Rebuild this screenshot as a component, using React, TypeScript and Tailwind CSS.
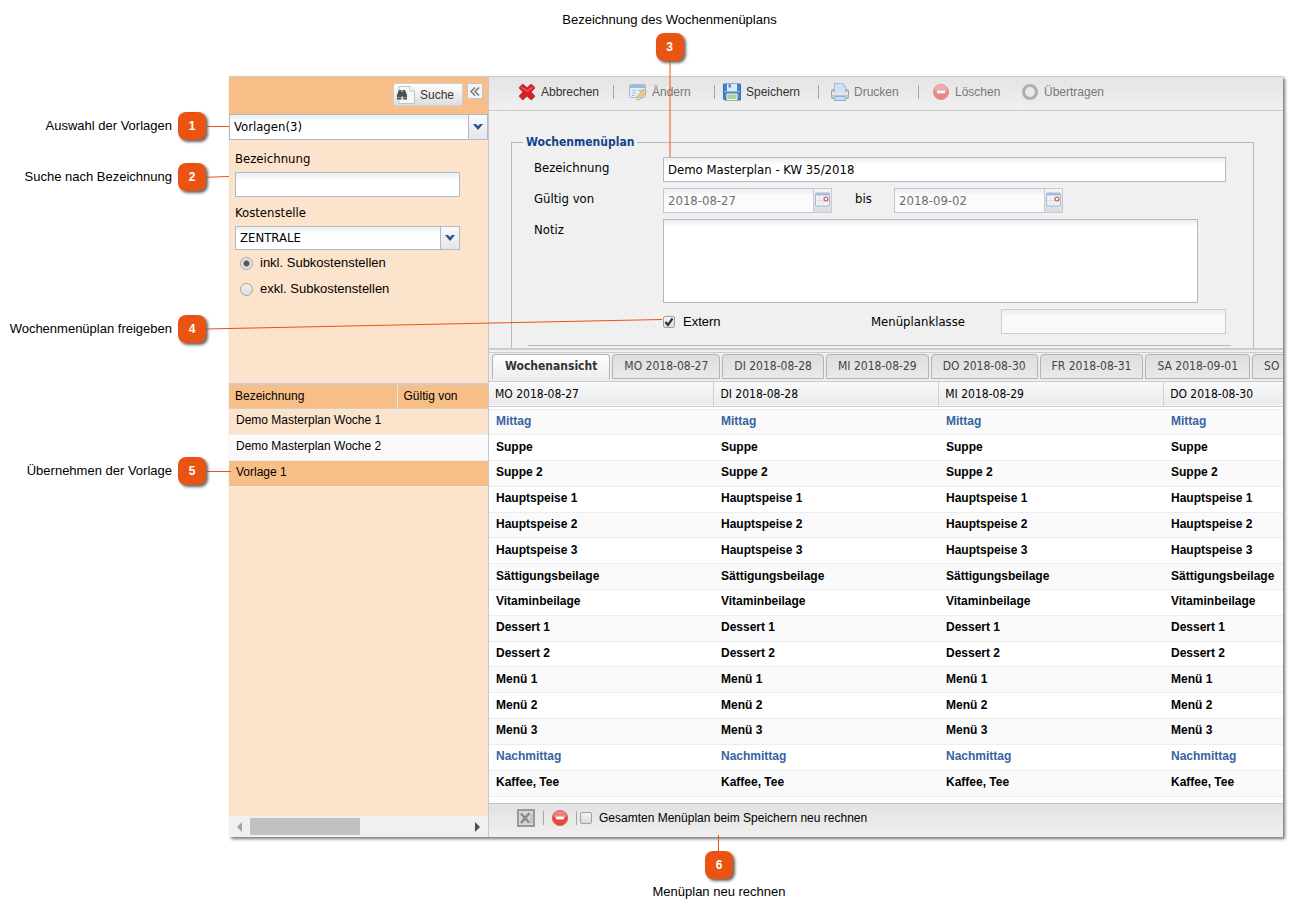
import { useState } from "react";
import type { ReactNode } from "react";
import clsx from "clsx";

const days = ["MO 2018-08-27", "DI 2018-08-28", "MI 2018-08-29", "DO 2018-08-30"];

const tabs = [
    "Wochenansicht",
    "MO 2018-08-27",
    "DI 2018-08-28",
    "MI 2018-08-29",
    "DO 2018-08-30",
    "FR 2018-08-31",
    "SA 2018-09-01",
    "SO",
];

const menuRows = [
    { name: "Mittag", group: true },
    { name: "Suppe" },
    { name: "Suppe 2" },
    { name: "Hauptspeise 1" },
    { name: "Hauptspeise 2" },
    { name: "Hauptspeise 3" },
    { name: "Sättigungsbeilage" },
    { name: "Vitaminbeilage" },
    { name: "Dessert 1" },
    { name: "Dessert 2" },
    { name: "Menü 1" },
    { name: "Menü 2" },
    { name: "Menü 3" },
    { name: "Nachmittag", group: true },
    { name: "Kaffee, Tee" },
];

const templates = ["Demo Masterplan Woche 1", "Demo Masterplan Woche 2", "Vorlage 1"];

const tahoma = "font-['DejaVu_Sans_Condensed','Noto_Sans',sans-serif]";
const field = "border border-[#b5b8c8] bg-[linear-gradient(#e9eeee,#ffffff_7px)] px-1 outline-none";

function CancelIcon() {
    return (
        <svg viewBox="0 0 18 18" className="h-[18px] w-[18px]">
            <path d="M1.3 4.4 4.4 1.3Q5 1 6 2L9 4.8 12 2Q13 1 13.6 1.3L16.7 4.4Q17 5 16 6L13.2 9 16 12Q17 13 16.7 13.6L13.6 16.7Q13 17 12 16L9 13.2 6 16Q5 17 4.4 16.7L1.3 13.6Q1 13 2 12L4.8 9 2 6Q1 5 1.3 4.400Z" fill="#dc1f26" stroke="#8c3a3a" strokeWidth="0.8" />
            <path d="M3.500 4.300 9 8.200 14.500 4.300" fill="none" stroke="#ee6a70" strokeWidth="1.100" />
        </svg>
    );
}

function EditIcon() {
    return (
        <svg viewBox="0 0 18 18" className="h-[18px] w-[18px] opacity-60">
            <rect x="0.5" y="1.5" width="16" height="13" rx="1" fill="#e3eefb" stroke="#7b9fd0" />
            <path d="M1 2h15v3H1z" fill="#6f9bd8" />
            <path d="M3 7.5h4M3 10h4M3 12.5h3M9 7.5h5" stroke="#7b9fd0" strokeWidth="1.2" />
            <path d="M8 17l1-4.5L14.5 6l3 2.8L12 15.5z" fill="#f5b540" stroke="#b8792a" strokeWidth="0.9" />
            <path d="M8 17l1-4 2.7 2.5z" fill="#fbe3c0" stroke="#a97742" strokeWidth="0.6" />
        </svg>
    );
}

function SaveIcon() {
    return (
        <svg viewBox="0 0 18 18" className="h-[18px] w-[18px]">
            <path d="M.5 1h17v16H1.5l-1-1z" fill="#4a84cc" stroke="#3a6fb8" />
            <path d="M4 1h10v7H4z" fill="#dbe9f9" />
            <path d="M5.500 1h2.500v3.500H5.500z" fill="#5b8fd0" />
            <path d="M1 8.500h16" stroke="#8fb6e6" />
            <path d="M4 11h10v5.500H4z" fill="#a9d68e" stroke="#f0f6ea" />
        </svg>
    );
}

function PrintIcon() {
    return (
        <svg viewBox="0 0 18 18" className="h-[18px] w-[18px] opacity-70">
            <rect x="0.500" y="6.500" width="17" height="9" rx="1.500" fill="#b9b9b9" stroke="#858585" />
            <path d="M3.500 10V.5h8.500l2.500 2.500v7z" fill="#c4dffb" stroke="#7eaede" />
            <path d="M12 .5V3h2.500" fill="#fff" stroke="#7eaede" />
            <path d="M1 9.500h16v2H1z" fill="#f0f0f0" />
            <path d="M4 13.500h10l.8 4H3.200z" fill="#b7d8fa" stroke="#6b99c8" />
        </svg>
    );
}

function DeleteIcon({ faded }: { faded?: boolean }) {
    return (
        <svg viewBox="0 0 18 18" className={clsx("h-[18px] w-[18px]", faded && "opacity-60")}>
            <circle cx="9" cy="9" r="7.6" fill="#e8473f" stroke="#d0605a" />
            <path d="M2.4 8a6.6 6.6 0 0 1 13.2 0Q9 11 2.4 8z" fill="#f1837b" />
            <rect x="5" y="7.6" width="8" height="2.8" fill="#fff" />
        </svg>
    );
}

function TransferIcon() {
    return (
        <svg viewBox="0 0 18 18" className="h-[18px] w-[18px]">
            <circle cx="9" cy="9" r="6.5" fill="none" stroke="#b0b0b0" strokeWidth="3.2" />
        </svg>
    );
}

function ExcelIcon() {
    return (
        <svg viewBox="0 0 18 18" className="h-[18px] w-[18px]">
            <rect x="1" y="1" width="16" height="16" fill="#d6d6d6" stroke="#989898" strokeWidth="2" />
            <path d="M4 4.500l8 9M12.500 4l-8.500 10" stroke="#8a8a8a" strokeWidth="2.600" />
            <path d="M11 13h4.500M13 10h2.500M13.500 7h2" stroke="#999" />
        </svg>
    );
}

function SearchIcon() {
    return (
        <svg viewBox="0 0 20 18" className="h-[18px] w-5">
            <path d="M3 .5h11l4.500 4.500v12.500H3z" fill="#f7f7f7" stroke="#c2c2c2" />
            <path d="M14 .5V5h4.500" fill="#fff" stroke="#c2c2c2" />
            <path d="M3 4h2.500v2h1V4H9l2 5v4.500H7V10.500H5.500v3H1V9z" fill="#4a5258" />
            <path d="M1.500 11.500h3.500M7.500 11.500h3" stroke="#9aa2a8" />
        </svg>
    );
}

function CalendarIcon() {
    return (
        <svg viewBox="0 0 15 15" className="h-[15px] w-[15px] shrink-0 opacity-70">
            <rect x="0.5" y="1" width="14" height="13" rx="1" fill="#f7f9fc" stroke="#8aa4cc" />
            <path d="M.5 1h14v2.500H.5z" fill="#8aa8d6" />
            <path d="M1 8.500h13M4.500 4v9.500M8 4v9.500" stroke="#d8dfea" />
            <circle cx="11" cy="7" r="1.900" fill="#fff" stroke="#c0392b" strokeWidth="1.300" />
        </svg>
    );
}

function Chevron() {
    return (
        <svg viewBox="0 0 10 6" className="h-1.5 w-2.5">
            <path d="M0 0h3l2 2 2-2h3L5 6z" fill="#2f5192" />
        </svg>
    );
}

function ToolButton({ icon, label, disabled, className }: { icon: ReactNode; label: string; disabled?: boolean; className: string }) {
    return (
        <button type="button" disabled={disabled} className={clsx("flex shrink-0 items-center gap-[5px]", disabled ? "text-[#777777]" : "text-[#333333]", className)}>
            {icon}
            {label}
        </button>
    );
}

function Separator() {
    return <span className="h-3.5 w-px shrink-0 bg-[#aca899]" />;
}

function Combo({ id, label, value, className }: { id: string; label: string; value: string; className: string }) {
    return (
        <div className={clsx("relative", className)}>
            <select id={id} aria-label={label} className={clsx(field, "h-full w-full appearance-none pr-5 text-[13px]")}>
                <option>{value}</option>
            </select>
            <span className="pointer-events-none absolute inset-y-0 right-0 flex w-5 items-center justify-center border border-[#b5b8c8] bg-linear-to-b from-[#fafafa] to-[#e4e6ea]">
                <Chevron />
            </span>
        </div>
    );
}

function Check({ id, checked }: { id: string; checked?: boolean }) {
    return (
        <span className="relative flex h-3 w-3 shrink-0">
            <input
                id={id}
                type="checkbox"
                defaultChecked={checked}
                className="peer h-3 w-3 appearance-none rounded-xs border border-[#a0a0a0] bg-linear-to-b from-[#f4f4f4] to-[#dcdcdc]"
            />
            <svg viewBox="0 0 12 12" className="pointer-events-none invisible absolute inset-0 peer-checked:visible">
                <path d="M2.500 6l2.500 3 4.500-6.500" fill="none" stroke="#333" strokeWidth="2.200" />
            </svg>
        </span>
    );
}

function Radio({ id, checked }: { id: string; checked?: boolean }) {
    return (
        <input
            id={id}
            type="radio"
            name="subkostenstellen"
            defaultChecked={checked}
            className="h-[13px] w-[13px] shrink-0 appearance-none rounded-full border border-[#a3a3a3] bg-linear-to-b from-[#f2f2f2] to-[#dcdcdc] checked:bg-[radial-gradient(circle,#555555_2px,#e6e6e6_4px)]"
        />
    );
}

function DateField({ id, value }: { id: string; value: string }) {
    return (
        <div className="flex h-[25px] w-[169px]">
            <input id={id} disabled defaultValue={value} className={clsx(field, "w-[150px] border-r-0 text-[13px] text-[#444444] opacity-75")} />
            <button type="button" disabled aria-label="Kalender" className="flex flex-1 items-start justify-center border border-[#c8cad6] bg-linear-to-b from-[#f4f4f4] to-[#dcdcdc] pt-[3px]">
                <CalendarIcon />
            </button>
        </div>
    );
}

function Sidebar() {
    const [selected, setSelected] = useState(2);

    return (
        <aside className="flex w-[260px] shrink-0 flex-col border-r border-[#c8c8c8] bg-[#fce3cb]">
            <div className="flex h-[37px] items-start justify-end gap-1 bg-[#f7be87] pt-[6px] pr-[5px]">
                <button type="button" className="flex h-[23px] w-[70px] items-center gap-1 rounded-xs border border-[#cfcfcf] bg-linear-to-b from-white to-[#dedede] pl-0.5 text-xs text-[#333333]">
                    <SearchIcon />
                    Suche
                </button>
                <button type="button" aria-label="Einklappen" className="flex h-4 w-4 items-center justify-center rounded-xs border border-[#c4c4c4] bg-[#f4f4f4]">
                    <svg viewBox="0 0 10 9" className="h-[9px] w-2.5">
                        <path d="M5 .5l-4 4 4 4M9 .5l-4 4 4 4" fill="none" stroke="#777" strokeWidth="1.500" />
                    </svg>
                </button>
            </div>

            <div className={clsx("h-[269px]", tahoma)}>
                <Combo id="vorlagen" label="Vorlagen" value="Vorlagen(3)" className="h-[26px]" />
                <div className="pr-7 pl-1.5 text-[13px]">
                    <label htmlFor="suche" className="mt-2.5 mb-1 block leading-[18px]">Bezeichnung</label>
                    <input id="suche" className={clsx(field, "block h-[25px] w-full")} />
                    <label htmlFor="kostenstelle" className="mt-[7px] mb-1 block leading-[18px]">Kostenstelle</label>
                    <Combo id="kostenstelle" label="Kostenstelle" value="ZENTRALE" className="h-[24px]" />
                </div>
                <div className="flex flex-col pl-[11px] font-['Liberation_Sans',Arial,sans-serif] text-[13px] leading-[26px]">
                    <div className="flex items-center gap-[7px]">
                        <Radio id="inkl" checked />
                        <label htmlFor="inkl">inkl. Subkostenstellen</label>
                    </div>
                    <div className="flex items-center gap-[7px]">
                        <Radio id="exkl" />
                        <label htmlFor="exkl">exkl. Subkostenstellen</label>
                    </div>
                </div>
            </div>

            <table className="w-full table-fixed border-t-2 border-[#cccccc] text-left text-xs">
                <thead>
                    <tr className="h-6 border-b border-[#d0d0d0] bg-[#f7be87]">
                        <th className="w-[168px] border-r border-[#e8e8e8] px-1.5 font-normal">Bezeichnung</th>
                        <th className="px-1.5 font-normal">Gültig von</th>
                    </tr>
                </thead>
                <tbody>
                    {templates.map((name, i) => (
                        <tr
                            key={name}
                            onClick={() => setSelected(i)}
                            className={clsx("h-[26px] border-b border-[#ededed]", i === selected ? "bg-[#f7be87]" : i % 2 ? "bg-[#fafafa]" : "bg-[#fce3cb]")}
                        >
                            <td colSpan={2} className="px-[7px] pb-0.5">{name}</td>
                        </tr>
                    ))}
                </tbody>
            </table>

            {/* horizontal scrollbar of the template list */}
            <div className="mt-auto flex h-[21px] items-center bg-[#f0f0f0] px-[7px]">
                <svg viewBox="0 0 6 10" className="h-2.5 w-1.5">
                    <path d="M6 0v10L1 5z" fill="#a3a3a3" />
                </svg>
                <div className="ml-2 h-[17px] w-[110px] bg-[#c1c1c1]" />
                <svg viewBox="0 0 6 10" className="ml-auto h-2.5 w-1.5">
                    <path d="M0 0v10l5-5z" fill="#505050" />
                </svg>
            </div>
        </aside>
    );
}

function PlanForm() {
    return (
        <form className={clsx("h-[237px] overflow-hidden pt-[22px] pr-[29px] pl-[22px] text-[13px]", tahoma)}>
            <fieldset className="h-60 border border-[#b5b8c8]">
                <legend className="ml-[11px] px-[3px] text-xs leading-[18px] font-bold text-[#15428b]">Wochenmenüplan</legend>
                <div className="mt-1.5 mr-[22px] ml-4 flex flex-col gap-[6px] border-b border-[#b5b8c8] pr-[5px] pb-[11px] pl-1.5">
                    <div className="flex">
                        <label htmlFor="bezeichnung" className="w-[129px] shrink-0 leading-[22px]">Bezeichnung</label>
                        <input id="bezeichnung" defaultValue="Demo Masterplan - KW 35/2018" className={clsx(field, "h-[25px] min-w-0 flex-1")} />
                    </div>
                    <div className="flex">
                        <label htmlFor="von" className="w-[129px] shrink-0 leading-[22px]">Gültig von</label>
                        <DateField id="von" value="2018-08-27" />
                        <label htmlFor="bis" className="w-[62px] pl-[23px] leading-[22px]">bis</label>
                        <DateField id="bis" value="2018-09-02" />
                    </div>
                    <div className="flex pr-7">
                        <label htmlFor="notiz" className="w-[129px] shrink-0 leading-[22px]">Notiz</label>
                        <textarea id="notiz" className={clsx(field, "h-[84px] min-w-0 flex-1 resize-none")} />
                    </div>
                    <div className="flex items-center pl-[129px]">
                        <Check id="extern" checked />
                        <label htmlFor="extern" className="ml-2 font-['Liberation_Sans',Arial,sans-serif]">Extern</label>
                        <label htmlFor="klasse" className="ml-auto w-[130px]">Menüplanklasse</label>
                        <input id="klasse" disabled className={clsx(field, "h-[25px] w-[225px] opacity-65")} />
                    </div>
                </div>
            </fieldset>
        </form>
    );
}

function TabStrip() {
    const [active, setActive] = useState(0);

    return (
        <div className={clsx("mt-0.5 flex h-[30px] items-end gap-[2px] overflow-hidden border-y border-[#cccccc] bg-[#ededed] pb-[2px] pl-[3px] text-xs", tahoma)} role="tablist">
            {tabs.map((tab, i) => (
                <button
                    key={tab}
                    type="button"
                    role="tab"
                    aria-selected={i === active}
                    onClick={() => setActive(i)}
                    className={clsx(
                        "h-[25px] shrink-0 rounded-t-sm border border-[#b3b3b3] pb-0.5 whitespace-nowrap",
                        i === active
                            ? "border-b-0 bg-linear-to-b from-white to-[#ececec] px-3 font-bold text-[#333333]"
                            : "bg-linear-to-b from-[#dedede] to-[#e9e9e9] px-[11px] text-[#444444]",
                    )}
                >
                    {tab}
                </button>
            ))}
        </div>
    );
}

function WeekTable() {
    return (
        <div className="h-[421px] overflow-hidden bg-white">
            <table className={clsx("w-[900px] table-fixed text-left text-xs", tahoma)}>
                <thead>
                    <tr className="h-6 border-b border-[#cccccc] bg-linear-to-b from-[#f9f9f9] to-[#e9ebee]">
                        {days.map((day) => (
                            <th key={day} className="border-r border-[#d0d0d0] px-1.5 font-normal">{day}</th>
                        ))}
                    </tr>
                </thead>
            </table>
            <table className="mt-0.5 h-[388px] w-[900px] table-fixed text-xs font-bold">
                <tbody>
                    {menuRows.map((row) => (
                        <tr key={row.name} className="border-y border-[#ededed] odd:bg-[#fafafa]">
                            {days.map((day) => (
                                <td key={day} className={clsx("px-[7px] pb-0.5", row.group ? "text-[#3764a0]" : "text-black")}>{row.name}</td>
                            ))}
                        </tr>
                    ))}
                </tbody>
            </table>
        </div>
    );
}

function Callout({ n, text, className, textClassName }: { n: number; text: string; className: string; textClassName?: string }) {
    return (
        <div className={clsx("absolute flex items-center", className)}>
            <span className={clsx("text-[13px] leading-[18px] whitespace-nowrap", textClassName)}>{text}</span>
            <span className="flex h-7 w-7 shrink-0 items-center justify-center rounded-lg bg-[#ea5412] text-xs font-bold text-white shadow-[2px_2px_3px_#666666]">{n}</span>
        </div>
    );
}

export default function App() {
    return (
        <div className="relative min-h-[916px] bg-white pt-[76px] pr-[9px] pb-[79px] pl-[229px] font-['Liberation_Sans',Arial,sans-serif] text-black">
            <main className="flex border-t border-[#cccccc] shadow-[2px_2px_3px_#777777]">
                <Sidebar />
                <section className="min-w-0 flex-1 bg-[#f0f0f0]">
                    <div className="flex h-[34px] items-center overflow-hidden border-b border-[#cccccc] bg-linear-to-b from-[#e4e4e4] to-[#f0f0f0] pb-1 pl-[29px] text-xs">
                        <ToolButton icon={<CancelIcon />} label="Abbrechen" className="w-[95px]" />
                        <Separator />
                        <ToolButton icon={<EditIcon />} label="Ändern" disabled className="w-[100px] pl-[15px]" />
                        <Separator />
                        <ToolButton icon={<SaveIcon />} label="Speichern" className="w-[103px] pl-2" />
                        <Separator />
                        <ToolButton icon={<PrintIcon />} label="Drucken" disabled className="w-[99px] pl-[12px]" />
                        <Separator />
                        <ToolButton icon={<DeleteIcon faded />} label="Löschen" disabled className="w-[102px] pl-[13px]" />
                        <ToolButton icon={<TransferIcon />} label="Übertragen" disabled className="" />
                    </div>
                    <PlanForm />
                    <div className="h-0.5 bg-[#cccccc]" />
                    <TabStrip />
                    <WeekTable />
                    <div className="flex h-[34px] items-center border-t border-[#c4c4c4] bg-linear-to-b from-[#e2e2e2] to-[#f0f0f0] pb-1.5 pl-7 text-xs">
                        <button type="button" aria-label="Excel-Export" className="mr-2"><ExcelIcon /></button>
                        <Separator />
                        <button type="button" aria-label="Entfernen" className="mx-[7px]"><DeleteIcon /></button>
                        <Separator />
                        <label className="ml-[3px] flex items-center gap-[7px]" htmlFor="neurechnen">
                            <Check id="neurechnen" />
                            Gesamten Menüplan beim Speichern neu rechnen
                        </label>
                    </div>
                </section>
            </main>

            {/* leader lines from the numbered markers to the controls */}
            <svg width="1292" height="916" className="pointer-events-none absolute top-0 left-0 stroke-[#ea5412]">
                <path d="M205 126.500h24M205 177.300L229 176.500M670 61v96M205 329L662 319.500M205 471.500h26M718.500 835v17" fill="none" />
            </svg>

            <Callout n={1} text="Auswahl der Vorlagen" className="top-[112px] left-0 w-[206px] justify-end gap-1.5" />
            <Callout n={2} text="Suche nach Bezeichnung" className="top-[163px] left-0 w-[206px] justify-end gap-1.5" />
            <Callout n={3} text="Bezeichnung des Wochenmenüplans" className="top-[11px] left-[560px] w-[219px] flex-col gap-1" />
            <Callout n={4} text="Wochenmenüplan freigeben" className="top-[315px] left-0 w-[206px] justify-end gap-1.5" />
            <Callout n={5} text="Übernehmen der Vorlage" className="top-[457px] left-0 w-[206px] justify-end gap-1.5" />
            <Callout n={6} text="Menüplan neu rechnen" className="top-[851px] left-[619px] w-[200px] flex-col gap-1" textClassName="order-last" />
        </div>
    );
}
